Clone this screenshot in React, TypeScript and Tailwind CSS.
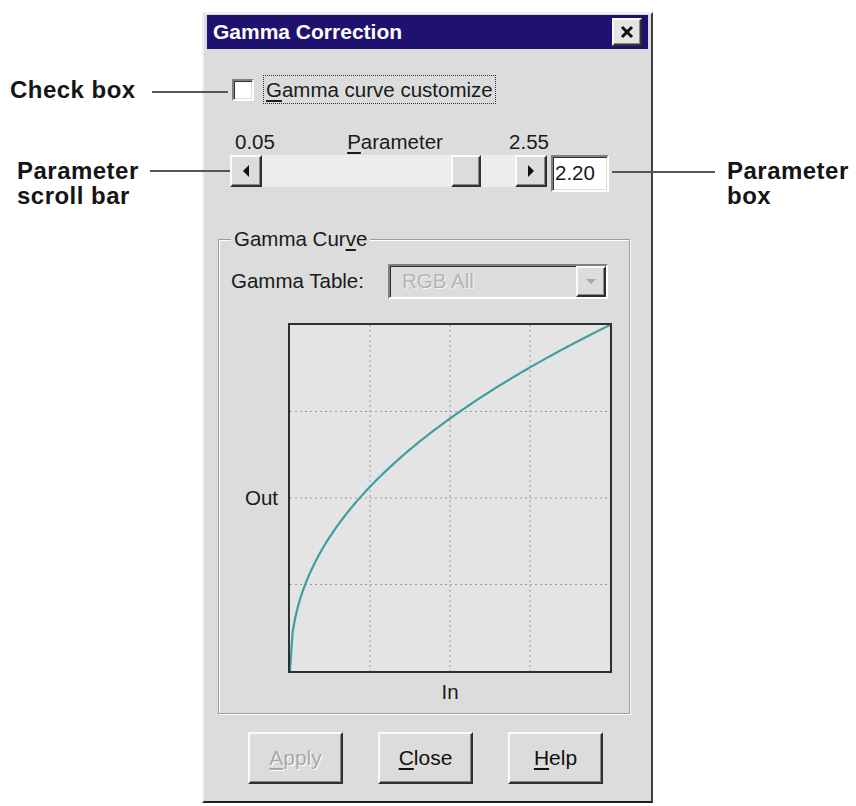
const raised =
  'border-2 border-t-[#fafafa] border-l-[#fafafa] border-r-[#303030] border-b-[#303030] shadow-[inset_-1px_-1px_0_#8a8a8a]'
const sunken =
  'border-2 border-t-[#808080] border-l-[#808080] border-r-white border-b-white shadow-[inset_1px_1px_0_#303030,inset_-1px_-1px_0_#dcdcdc]'

const curvePoints = Array.from({ length: 121 }, (_, i) => {
  const t = i / 120
  return `${(t * 320).toFixed(2)},${(346 - 346 * Math.pow(t, 1 / 2.2)).toFixed(2)}`
}).join(' ')

function Arrow({ dir }: { dir: 'left' | 'right' | 'down' }) {
  const d = dir === 'left' ? 'M9 1 L3 7 L9 13 Z' : dir === 'right' ? 'M3 1 L9 7 L3 13 Z' : 'M1 4 L11 4 L6 9 Z'
  return (
    <svg width="12" height="14" viewBox="0 0 12 14">
      <path d={d} fill={dir === 'down' ? '#a8a8a8' : '#101010'} />
    </svg>
  )
}

function DialogButton({ label, mnemonic, disabled }: { label: string; mnemonic: string; disabled?: boolean }) {
  const rest = label.slice(mnemonic.length)
  return (
    <button
      className={`${raised} flex h-[52px] w-[95px] items-center justify-center bg-[#dcdcdc] text-[21px] ${
        disabled ? 'text-[#a8a8a8] [text-shadow:1px_1px_0_#ffffff]' : 'text-[#111]'
      }`}
    >
      <span>
        <u className="underline-offset-[3px]">{mnemonic}</u>
        {rest}
      </span>
    </button>
  )
}

export default function App() {
  return (
    <div className="relative flex h-[806px] w-[856px] bg-white font-['Liberation_Sans',Arial,sans-serif] text-[#1a1a1a]">
      {/* left annotations */}
      <div className="w-[202px] shrink-0 pl-[10px] text-[24px] font-bold leading-[25px] tracking-[0.02em] text-[#151515]">
        <div className="mt-[77px]">Check box</div>
        <div className="mt-[56px] pl-[7px]">
          Parameter
          <br />
          scroll bar
        </div>
      </div>

      {/* dialog */}
      <div className="mt-[12px] flex h-[791px] w-[451px] shrink-0 flex-col border-2 border-t-[#f0f0f0] border-l-[#f0f0f0] border-r-[#404040] border-b-[#202020] bg-[#dcdcdc]">
        <div className="mx-[3px] mt-[1px] flex h-[34px] items-center justify-between bg-[#1e1170] pl-[6px] pr-[6px]">
          <span className="text-[21px] font-bold text-white">Gamma Correction</span>
          <button className={`${raised} flex h-[28px] w-[30px] items-center justify-center bg-[#e4e4e4]`}>
            <svg width="14" height="14" viewBox="0 0 14 14">
              <path d="M2 2 L12 12 M12 2 L2 12" stroke="#111" strokeWidth="3" />
            </svg>
          </button>
        </div>

        <div className="flex flex-1 flex-col pl-[28px] text-[20.5px]">
          {/* checkbox */}
          <div className="mt-[26px] flex items-center">
            <div className={`${sunken} h-[22px] w-[22px] bg-white`} />
            <div className="ml-[9px] border border-dotted border-[#333] px-[2px] leading-[27px]">
              <u className="underline-offset-[3px]">G</u>amma curve customize
            </div>
          </div>

          {/* scale labels */}
          <div className="mt-[27px] flex w-[317px] justify-between pl-[3px] leading-[22px]">
            <span>0.05</span>
            <span className="ml-[6px]">
              <u className="underline-offset-[3px]">P</u>arameter
            </span>
            <span>2.55</span>
          </div>

          {/* scroll bar + value */}
          <div className="-ml-[2px] mt-[2px] flex items-start">
            <div className="flex h-[32px] w-[317px] bg-[#ececec]">
              <div className={`${raised} flex h-[32px] w-[32px] items-center justify-center bg-[#dcdcdc]`}>
                <Arrow dir="left" />
              </div>
              <div className="flex-1" />
              <div className={`${raised} h-[32px] w-[30px] bg-[#dcdcdc]`} />
              <div className="w-[34px]" />
              <div className={`${raised} flex h-[32px] w-[32px] items-center justify-center bg-[#dcdcdc]`}>
                <Arrow dir="right" />
              </div>
            </div>
            <div className={`${sunken} ml-[4px] flex h-[37px] w-[58px] items-center bg-white pl-[2px]`}>
              2.20
            </div>
          </div>

          {/* group box */}
          <fieldset className="-ml-[14px] mt-[36px] w-[412px] border border-[#9c9c9c] px-[12px] pb-[10px] shadow-[1px_1px_0_#ffffff,inset_1px_1px_0_#ffffff]">
            <legend className="bg-[#dcdcdc] px-[3px] leading-[22px]">
              Gamma Cur<u className="underline-offset-[3px]">v</u>e
            </legend>

            <div className="mt-[14px] flex items-center">
              <span className="w-[157px]">Gamma Table:</span>
              <div className={`${sunken} flex h-[35px] w-[220px] items-center bg-[#dcdcdc]`}>
                <span className="flex-1 pl-[12px] text-[#b4b4b4] [text-shadow:1px_1px_0_#f4f4f4]">RGB All</span>
                <div className={`${raised} flex h-[31px] w-[30px] items-center justify-center bg-[#dcdcdc]`}>
                  <Arrow dir="down" />
                </div>
              </div>
            </div>

            <div className="mt-[24px] flex items-center">
              <span className="ml-[14px] w-[43px]">Out</span>
              <div className="h-[350px] w-[324px] border-2 border-[#2e2e2e] bg-[#e4e4e4]">
                <svg width="320" height="346" viewBox="0 0 320 346">
                  {[80, 160, 240].map((x) => (
                    <line key={x} x1={x} y1="0" x2={x} y2="346" stroke="#9a9a9a" strokeDasharray="2 3" />
                  ))}
                  {[86.5, 173, 259.5].map((y) => (
                    <line key={y} x1="0" y1={y} x2="320" y2={y} stroke="#9a9a9a" strokeDasharray="2 3" />
                  ))}
                  <polyline points={curvePoints} fill="none" stroke="#3f9f9f" strokeWidth="2.2" />
                </svg>
              </div>
            </div>
            <div className="ml-[57px] mt-[8px] w-[324px] text-center leading-[22px]">In</div>
          </fieldset>

          {/* buttons */}
          <div className="-ml-[28px] mt-[18px] flex justify-center gap-[35px] pr-[4px]">
            <DialogButton label="Apply" mnemonic="A" disabled />
            <DialogButton label="Close" mnemonic="C" />
            <DialogButton label="Help" mnemonic="H" />
          </div>
        </div>
      </div>

      {/* right annotations */}
      <div className="flex-1 pl-[74px] text-[24px] font-bold leading-[25px] tracking-[0.02em] text-[#151515]">
        <div className="mt-[158px]">
          Parameter
          <br />
          box
        </div>
      </div>

      {/* leader lines */}
      <div className="absolute left-[152px] top-[91px] h-[2px] w-[76px] bg-[#555]" />
      <div className="absolute left-[150px] top-[170px] h-[2px] w-[80px] bg-[#555]" />
      <div className="absolute left-[612px] top-[171px] h-[2px] w-[103px] bg-[#555]" />
    </div>
  )
}
